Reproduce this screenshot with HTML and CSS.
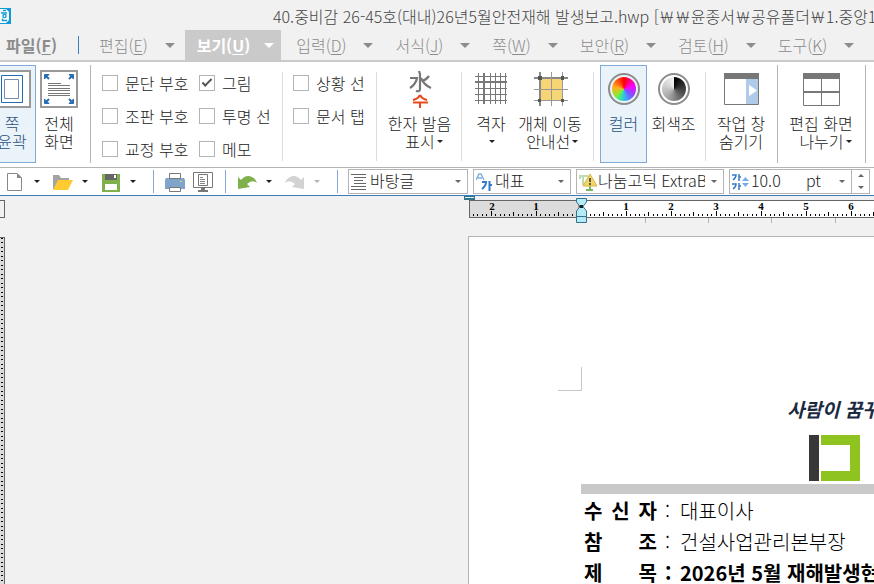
FILE: index.html
```html
<!DOCTYPE html>
<html lang="ko">
<head>
<meta charset="utf-8">
<title>40.중비감 26-45호(대내)26년5월안전재해 발생보고.hwp</title>
<link rel="stylesheet" href="styles.css">
</head>
<body>
<header class="titlebar">
  <svg class="app-icon" width="11" height="16" viewBox="0 0 11 16"><path d="M0 0H11V16H0Z" fill="#0e9bd8"/><path d="M0 1H6L9 4V12L6 15H0Z" fill="#fff"/><path d="M3 2.500H6M1 5H7" stroke="#0e9bd8" stroke-width="1.4"/><circle cx="4.500" cy="8" r="1.600" fill="none" stroke="#0e9bd8" stroke-width="1.400"/><path d="M2.500 10.500V12.500H7" fill="none" stroke="#0e9bd8" stroke-width="1.400"/></svg>
  <h1 class="title">40.중비감 26-45호(대내)26년5월안전재해 발생보고.hwp [￦￦윤종서￦공유폴더￦1.중앙1</h1>
</header>

<nav class="menubar">
  <button class="menu file">파일(<u>F</u>)</button>
  <button class="menu">편집(<u>E</u>)<i class="drop"></i></button>
  <button class="menu active">보기(<u>U</u>)<i class="drop"></i></button>
  <button class="menu">입력(<u>D</u>)<i class="drop"></i></button>
  <button class="menu">서식(<u>J</u>)<i class="drop"></i></button>
  <button class="menu">쪽(<u>W</u>)<i class="drop"></i></button>
  <button class="menu">보안(<u>R</u>)<i class="drop"></i></button>
  <button class="menu">검토(<u>H</u>)<i class="drop"></i></button>
  <button class="menu">도구(<u>K</u>)<i class="drop"></i></button>
</nav>

<section class="ribbon">
  <div class="group strong views">
    <button class="tool on outline">
      <svg width="38" height="38" viewBox="0 0 38 38"><path d="M1 1H37V37H1Z" fill="#fff" stroke="#999" stroke-width="2"/><path d="M8.500 5.500H29.500V32.500H8.500Z" fill="#fff" stroke="#1f6cb4"/><path d="M11.500 9.500H25.500V28.500H11.500Z" fill="#fff" stroke="#7590ae"/></svg>
      <span>쪽<br>윤곽</span>
    </button>
    <button class="tool">
      <svg width="38" height="38" viewBox="0 0 38 38"><path d="M1 1H37V37H1Z" fill="#fff" stroke="#999" stroke-width="2"/><path d="M8 13.500H21M8 15.500H30M8 18.500H30M8 20.500H30M8 23.500H30M8 25.500H30" stroke="#777"/><g fill="#2a6db4" stroke="#2a6db4"><path d="M4.500 4.500H9L4.500 9ZM33.500 4.500H29L33.500 9ZM4.500 33.500H9L4.500 29ZM33.500 33.500H29L33.500 29Z"/><path d="M6 6L9 9M32 6L29 9M6 32L9 29M32 32L29 29" stroke-width="2"/></g></svg>
      <span>전체<br>화면</span>
    </button>
  </div>
  <div class="group checks marks">
    <label><input type="checkbox">문단 부호</label>
    <label><input type="checkbox" checked>그림</label>
    <label><input type="checkbox">조판 부호</label>
    <label><input type="checkbox">투명 선</label>
    <label><input type="checkbox">교정 부호</label>
    <label><input type="checkbox">메모</label>
  </div>
  <div class="group checks panels">
    <label><input type="checkbox">상황 선</label>
    <label><input type="checkbox">문서 탭</label>
  </div>
  <div class="group hanja">
    <button class="tool">
      <svg width="38" height="38" viewBox="0 0 38 38"><g fill="none" stroke="#777" stroke-width="2.200"><path d="M18 1L19 4V19Q19 22 15 21"/><path d="M9 8H16Q15 14 9 18M28 6Q25 10 21 11M20 8Q23 15 30 18"/></g><g fill="none" stroke="#e8491f" stroke-width="2"><path d="M19 25Q17 29 12 30M19 25Q21 29 26 30"/><path d="M12 32.500H27M19 33V38"/></g></svg>
      <span>한자 발음<br>&nbsp;&nbsp;표시<i class="mini"></i></span>
    </button>
  </div>
  <div class="group guides">
    <button class="tool grid">
      <svg width="38" height="38" viewBox="0 0 38 38" stroke="#777"><path d="M6.500 3V34M18.500 3V34M23.500 3V34M28.500 3V34M33.500 3V34M3 6.500H35M3 18.500H35M3 24.500H35M3 30.500H35"/><path d="M12 3V34M3 12H35" stroke-width="2"/></svg>
      <span>격자<br><i class="mini"></i></span>
    </button>
    <button class="tool object">
      <svg width="38" height="38" viewBox="0 0 38 38"><path d="M9 8H31V30H9Z" fill="#f8d574"/><path d="M9 2V36M3 8H37" stroke="#888" stroke-width="2"/><path d="M20.500 2V36M31.500 2V36M3 19.500H37M3 30.500H37" stroke="#999"/><path d="M7 6h4v4h-4ZM30 6h3v4h-3ZM7 29h3v3h-3ZM30 29h3v3h-3Z" fill="#555"/></svg>
      <span>개체 이동<br>&nbsp;안내선<i class="mini"></i></span>
    </button>
  </div>
  <div class="group colors">
    <button class="tool on"><b class="disc hue"></b><span>컬러</span></button>
    <button class="tool"><b class="disc mono"></b><span>회색조</span></button>
  </div>
  <div class="group strong pane">
    <button class="tool">
      <svg width="38" height="38" viewBox="0 0 38 38"><path d="M2.500 5.500H36.500V34.500H2.500Z" fill="#fff" stroke="#777"/><path d="M24 8H36V34H24Z" fill="#b0cbe9"/><path d="M2 3H37V9H2Z" fill="#777"/><path d="M27 15L35 20.500L27 26Z" fill="#fff"/></svg>
      <span>작업 창<br>숨기기</span>
    </button>
  </div>
  <div class="group strong split">
    <button class="tool">
      <svg width="38" height="38" viewBox="0 0 38 38"><path d="M1.500 5.500H37.500V35.500H1.500Z" fill="#fff" stroke="#777"/><path d="M1 3H38V9H1Z" fill="#777"/><path d="M19.500 8V35" stroke="#777"/><path d="M1 22H38" stroke="#777" stroke-width="2"/></svg>
      <span>편집 화면<br>&nbsp;&nbsp;나누기<i class="mini"></i></span>
    </button>
  </div>
</section>

<section class="toolbar">
  <div class="tools files">
    <button class="quick" aria-label="새 문서"><svg width="20" height="20" viewBox="0 0 20 20"><path d="M2.500 1.500H12L16.500 6V18.500H2.500Z" fill="#fff" stroke="#888"/><path d="M12 1L17 6H12Z" fill="#888"/></svg><i class="mini"></i></button>
    <button class="quick" aria-label="열기"><svg width="20" height="20" viewBox="0 0 20 20"><path d="M0 3H6L8 6H16V9H5L2 17H0Z" fill="#a3a3a3"/><path d="M5 8H20L15 18H0Z" fill="#ffcb30"/></svg><i class="mini"></i></button>
    <button class="quick" aria-label="저장"><svg width="20" height="20" viewBox="0 0 20 20"><path d="M1 2H19V20H1Z" fill="#7fb04b"/><path d="M4 2H16V8H4Z" fill="#666"/><path d="M13 3H15V6H13Z" fill="#fff"/><path d="M4 12H16V18H4Z" fill="#fff"/></svg><i class="mini"></i></button>
  </div>
  <div class="tools output">
    <button class="quick" aria-label="인쇄"><svg width="20" height="20" viewBox="0 0 20 20"><path d="M1 6H19L20 8V17H0V8Z" fill="#80a5cc"/><path d="M4.500 1.500H15.500V6.500H4.500ZM4.500 15.500H15.500V19.500H4.500Z" fill="#fff" stroke="#777"/><path d="M15 9H17V10H15Z" fill="#ffd23d"/></svg></button>
    <button class="quick" aria-label="미리 보기"><svg width="20" height="20" viewBox="0 0 20 20"><path d="M.5 .5H19.500V15.500H.5Z" fill="#fff" stroke="#777"/><path d="M5.500 2.500H14.500V13.500H5.500Z" fill="#fff" stroke="#777"/><path d="M7 5.500H10M7 7.500H12M7 9.500H12M7 11.500H12" stroke="#888"/><path d="M8 16H12V18H15V20H5V18H8Z" fill="#777"/></svg></button>
  </div>
  <div class="tools history">
    <button class="quick" aria-label="되돌리기"><svg width="20" height="20" viewBox="0 0 20 20"><path d="M1 5L4 8Q9 2 15 5Q19 7 20 11Q15 7 10 12L13 15L1 17Z" fill="#7fb04b"/></svg><i class="mini"></i></button>
    <button class="quick faded" aria-label="다시 실행"><svg width="20" height="20" viewBox="0 0 20 20"><path d="M19 5L16 8Q11 2 5 5Q1 7 0 11Q5 7 10 12L7 15L19 17Z" fill="#d2d2d2"/></svg><i class="mini"></i></button>
  </div>
  <div class="fields">
    <div class="field style">
      <svg width="16" height="18" viewBox="0 0 16 18"><path d="M0 1.500H15M3 4.500H15M3 7.500H12M3 10.500H15M0 13.500H15M0 16.500H15" stroke="#666"/></svg>
      <select aria-label="스타일"><option>바탕글</option></select><i class="mini"></i>
    </div>
    <div class="field script">
      <svg width="16" height="18" viewBox="0 0 16 18"><path d="M0 7L3 1H5L8 7M2 5H6" fill="none" stroke="#84b0df" stroke-width="1.500"/><path d="M6 9H10Q10 13 6 16M13.500 8V18M13 12H16" fill="none" stroke="#2f78cb" stroke-width="2"/></svg>
      <select aria-label="언어"><option>대표</option></select><i class="mini"></i>
    </div>
    <div class="field font">
      <svg width="18" height="18" viewBox="0 0 18 18"><path d="M0 3H9M1 3V6M4 3V12" stroke="#bcdcae" stroke-width="2"/><path d="M11 13V17M7 17H14" stroke="#79b65d" stroke-width="2"/><path d="M11 1L18 13H4Z" fill="#f3d66b" stroke="#d3b64a"/><path d="M11 5V9M11 10V12" stroke="#333" stroke-width="1.500"/></svg>
      <select aria-label="글꼴"><option>나눔고딕 ExtraBold</option></select><i class="mini"></i>
    </div>
    <div class="field size">
      <svg width="18" height="18" viewBox="0 0 18 18"><path d="M0 2H4Q4 5 1 7M7 1V8M7 4H9M0 11H4Q4 14 1 16M7 10V17M7 13H9" fill="none" stroke="#347cc5" stroke-width="1.500"/><path d="M10 8L13.500 4L17 8ZM10 10L13.500 14L17 10Z" fill="#75aceb"/></svg>
      <input type="text" aria-label="글자 크기" value="10.0"><span class="unit">pt</span><i class="mini"></i>
      <div class="spin"><button aria-label="크게"><i class="mini up"></i></button><button aria-label="작게"><i class="mini"></i></button></div>
    </div>
  </div>
</section>

<main class="workspace">
  <div class="ruler-row">
    <div class="ruler-corner"></div>
    <svg class="ruler" height="40">
      <defs>
        <pattern id="cm" x="117" y="0" width="45" height="40" patternUnits="userSpaceOnUse"><path d="M0 15h1v5h-1ZM4 18h1v2h-1ZM9 18h1v2h-1ZM13 18h1v2h-1ZM18 18h1v2h-1ZM22 16h1v4h-1ZM27 18h1v2h-1ZM31 18h1v2h-1ZM36 18h1v2h-1ZM40 18h1v2h-1Z" fill="#000"/></pattern>
      </defs>
      <rect x="5" y="4" width="2000" height="18" fill="#666"/>
      <rect x="6" y="5" width="111" height="16" fill="#dcdcdc"/>
      <rect x="117" y="5" width="2000" height="16" fill="#fff"/>
      <rect x="8" y="0" width="2000" height="20" fill="url(#cm)"/>
      <g class="ruler-numbers"><text x="28" y="14">2</text><text x="72" y="14">1</text><text x="117" y="14">0</text><text x="162" y="14">1</text><text x="207" y="14">2</text><text x="252" y="14">3</text><text x="297" y="14">4</text><text x="342" y="14">5</text><text x="387" y="14">6</text></g>
      <path d="M181.500 22V27M244.500 22V27M307.500 22V27M371.500 22V27" stroke="#b4b4b4"/>
      <path d="M0 0H11V4H0Z" fill="#34738c"/><path d="M1 1H10V2H1Z" fill="#d8f4fa"/>
      <path d="M112.500 2.500H122.500V6L119 10.500L122.500 15V26.500H112.500V15L116 10.500L112.500 6Z" fill="#b5ebf7" stroke="#34738c"/>
      <path d="M112 20.500H123" stroke="#34738c"/><path d="M116 9H119V12H116Z" fill="#123"/>
    </svg>
  </div>
  <div class="canvas">
    <div class="side-ruler"></div>
    <article class="paper">
      <div class="margin-corner"></div>
      <header class="letterhead">
        <p class="slogan">사람이 꿈꾸</p>
        <svg class="logo" width="53" height="48" viewBox="0 0 53 48"><path d="M1 1H11V47H1Z" fill="#393837"/><path d="M13 1H52V47H13V37H42V11H13Z" fill="#8fc31f"/></svg>
      </header>
      <dl class="memo">
        <div><dt><span>수</span><span>신</span><span>자</span></dt><dd>대표이사</dd></div>
        <div><dt><span>참</span><span>조</span></dt><dd>건설사업관리본부장</dd></div>
        <div class="subject"><dt><span>제</span><span>목</span></dt><dd>2026년 5월 재해발생현</dd></div>
      </dl>
    </article>
  </div>
</main>
</body>
</html>
```
FILE: styles.css
```css
*, ::before, ::after { box-sizing: border-box; }

body {
  margin: 0;
  height: 100vh;
  overflow: hidden;
  display: flex;
  flex-direction: column;
  background: #f1f1f1;
  color: #222;
  font: 300 16px/18px "Noto Sans CJK KR", sans-serif;
}

button, input, select {
  font: inherit;
  color: inherit;
  background: none;
  border: 0;
  padding: 0;
  margin: 0;
}

svg { display: block; flex: none; }

.titlebar { display: flex; align-items: center; height: 30px; flex: none; padding-top: 2px; }
.title { margin: 0 0 0 262px; font-size: 16px; font-weight: 300; color: #444; white-space: nowrap; }

.menubar {
  display: flex;
  flex: none;
  gap: 3px;
  height: 32px;
  border-bottom: 2px solid #cacaca;
  color: #8c8c8c;
}
.menu { display: flex; flex: none; align-items: center; padding: 0 7px 0 12px; white-space: nowrap; }
.menu.active { background: #cacaca; color: #fff; font-weight: 700; }
.menu.file { position: relative; width: 84px; padding: 0 0 0 6px; font-weight: 700; }
.menu.file::after { content: ""; position: absolute; right: 5px; top: 6px; width: 1px; height: 18px; background: #3a80c0; }
.menu u { text-underline-offset: 2px; text-decoration-thickness: 1px; }
.drop { margin-left: 17px; border: 5px solid transparent; border-top-color: currentColor; border-bottom: 0; }
.active .drop { margin-left: 14px; }

.ribbon {
  display: flex;
  flex: none;
  height: 106px;
  padding: 3px 0 4px;
  background: #fff;
  border-bottom: 1px solid #b4b4b4;
}
.group { position: relative; display: flex; flex: none; }
.group::after { content: ""; position: absolute; right: 0; top: 7px; bottom: 2px; width: 1px; background: #dcdcdc; }
.group.strong::after { top: 0; bottom: 0; background: #b4b4b4; }
.tool {
  display: flex;
  flex-direction: column;
  align-items: center;
  width: 48px;
  padding: 4px 0 0;
  border: 1px solid transparent;
  white-space: nowrap;
}
.tool span { margin-top: 6px; }
.tool.on { background: #eaf2fa; border-color: #82aad6; color: #27507c; }
.tool.outline { margin-left: -12px; }
.mini { display: inline-block; margin-left: 2px; vertical-align: 5px; border: 3px solid transparent; border-top-color: currentColor; border-bottom: 0; }

.views { width: 91px; }
.views .tool + .tool { width: 46px; }
.marks { width: 192px; grid-template-columns: 97px 84px; }
.panels { width: 94px; }
.hanja { width: 85px; justify-content: center; }
.guides { width: 132px; }
.colors { width: 112px; padding-left: 6px; }
.colors .tool { width: 47px; }
.colors .tool + .tool { width: 53px; }
.pane { width: 72px; padding-right: 2px; justify-content: center; }
.split { width: 88px; padding-right: 2px; justify-content: center; }
.grid { width: 58px; }
.object { width: 60px; }

.checks { display: grid; grid-auto-rows: 33px; padding: 1px 0 0 11px; }
.panels { padding-left: 10px; }
.checks label { display: flex; align-items: center; gap: 7px; white-space: nowrap; line-height: 16px; }
.checks input { appearance: none; flex: none; width: 16px; height: 16px; background: #fff; border: 1px solid #b4b4b4; }
.checks input:checked::before {
  content: "";
  display: block;
  width: 10px;
  height: 5px;
  margin: 3px 0 0 2px;
  border: solid #555;
  border-width: 0 0 2px 2px;
  transform: rotate(-45deg);
}

.disc { width: 32px; height: 32px; margin: 3px 0; border: 2px solid #8c8c8c; border-radius: 50%; padding: 2px; background-clip: content-box; }
.hue { background-image: conic-gradient(red, magenta 70deg, #8050ff 130deg, #40a0ff 165deg, #30e8a0 200deg, #90e830 230deg, #ffb020 280deg, red); }
.mono { background-image: conic-gradient(#000, #555 120deg, #aaa 220deg, #f4f4f4); }
.hue, .mono { background-origin: content-box; }

.toolbar {
  display: flex;
  flex: none;
  height: 28px;
  background: #fff;
  border-bottom: 1px solid #3a7cb8;
}
.tools { position: relative; display: flex; flex: none; }
.tools::after { content: ""; position: absolute; right: 0; top: 2px; bottom: 2px; width: 1px; background: #82aad6; }
.quick { display: flex; align-items: center; width: 48px; }
.quick .mini { margin-left: 9px; }
.files { width: 154px; padding-left: 5px; }
.output { width: 72px; padding-left: 11px; }
.output .quick { width: 28px; }
.history { width: 112px; padding-left: 11px; }
.faded { color: #b4b4b4; }

.fields { display: flex; gap: 5px; padding: 1px 0 1px 10px; min-width: 0; }
.field { display: flex; flex: none; align-items: center; padding-left: 2px; border: 1px solid #b4b4b4; }
.field select, .field input { appearance: none; flex: 1; min-width: 0; height: 24px; padding: 0 0 3px 3px; overflow: hidden; }
.field > .mini { margin: 0 6px; color: #666; }
.style { width: 120px; }
.script { width: 98px; }
.font { width: 148px; }
.font select { padding-left: 1px; }
.size { width: 141px; }
.size input { width: 40px; padding-left: 1px; }
.unit { margin-right: 12px; padding-bottom: 3px; }
.spin { display: flex; flex-direction: column; width: 18px; height: 24px; border-left: 1px solid #b4b4b4; color: #666; }
.spin button { display: flex; flex: 1; align-items: center; justify-content: center; }
.spin .mini { margin: 0; }
.up { transform: rotate(180deg); }

.workspace { display: flex; flex: 1; flex-direction: column; min-height: 0; }
.ruler-row { display: flex; flex: none; height: 40px; }
.ruler-corner { width: 5px; height: 18px; margin: 4px 459px 0 0; flex: none; border: 1px solid #666; border-left: 0; }
.ruler { flex: 1; min-width: 0; }
.ruler-numbers { font: 700 11px "Liberation Serif", serif; text-anchor: middle; fill: #000; }

.canvas { display: flex; flex: 1; min-height: 0; }
.side-ruler {
  flex: none;
  width: 5px;
  margin: 1px 463px 0 0;
  border: 1px solid #666;
  border-width: 1px 1px 0 0;
  background: repeating-linear-gradient(#000 0 1px, transparent 1px 9px) 1px 0 / 2px 100% no-repeat,
    repeating-linear-gradient(transparent 0 4px, #000 4px 5px, transparent 5px 9px) 1px 0 / 2px 100% no-repeat #dcdcdc;
}
.paper {
  flex: 1;
  min-width: 0;
  overflow: hidden;
  padding-left: 112px;
  background: #fff;
  border: solid #b4b4b4;
  border-width: 1px 0 0 1px;
  color: #000;
}
.margin-corner { width: 24px; height: 24px; margin: 130px 0 0 -23px; border: solid #c8c8c8; border-width: 0 1px 1px 0; }
.letterhead { height: 103px; padding: 8px 0 0 206px; border-bottom: 10px solid #c9c9c9; }
.slogan { margin: 0; color: #1b2a40; font-size: 19px; font-weight: 700; font-style: italic; line-height: 20px; white-space: nowrap; }
.logo { margin: 15px 0 0 21px; }
.memo { margin: 1px 0 0 3px; font-size: 20px; line-height: 31px; }
.memo div { display: flex; white-space: nowrap; }
.memo dt { display: flex; flex: none; justify-content: space-between; width: 73px; font-weight: 700; }
.memo dd { margin: 0; }
.memo dd::before { content: ":"; display: inline-block; width: 23px; padding-left: 8px; }
.subject { font-weight: 700; }
```
